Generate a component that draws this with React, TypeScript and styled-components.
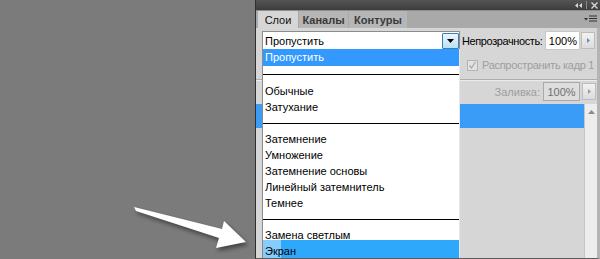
import styled, { createGlobalStyle } from 'styled-components';

const GlobalStyle = createGlobalStyle`
  html, body {
    margin: 0;
    padding: 0;
    background: #7b7b7b;
  }
  body {
    font-family: "Liberation Sans", Arial, sans-serif;
    font-size: 11px;
    color: #000;
  }
`;

type Mode = { name: string; selected?: boolean; hover?: boolean; short?: boolean } | { sep: number };

const modes: Mode[] = [
  { name: 'Пропустить', selected: true },
  { sep: 17 },
  { name: 'Обычные' },
  { name: 'Затухание' },
  { sep: 16 },
  { name: 'Затемнение' },
  { name: 'Умножение' },
  { name: 'Затемнение основы' },
  { name: 'Линейный затемнитель' },
  { name: 'Темнее' },
  { sep: 16 },
  { name: 'Замена светлым', short: true },
  { name: 'Экран', hover: true },
];

const tabs = [
  { name: 'Слои', w: 40, active: true },
  { name: 'Каналы', w: 49 },
  { name: 'Контуры', w: 58 },
];

function App() {
  return (
    <>
      <GlobalStyle />
      <Page>
        <Canvas>
          <Pointer />
        </Canvas>
        <Panel>
          <TitleBar>
            <CollapseIcon />
            <BarSep />
            <CloseIcon />
          </TitleBar>
          <TabStrip>
            {tabs.map((t) => (
              <Tab key={t.name} w={t.w} active={t.active}>
                {t.name}
              </Tab>
            ))}
            <PanelMenu />
          </TabStrip>
          <Body>
            <ControlRow>
              <Select>
                <SelectText>Пропустить</SelectText>
                <DropButton>
                  <svg width="7" height="4" viewBox="0 0 7 4">
                    <path d="M0 0h7L3.5 4z" fill="#000" />
                  </svg>
                </DropButton>
              </Select>
              <Label>Непрозрачность:</Label>
              <NumField w={35}>100%</NumField>
              <StepButton>
                <Tri color="#6a8db5" />
              </StepButton>
            </ControlRow>
            <PropagateRow>
              <CheckBox>
                <svg width="9" height="9" viewBox="0 0 9 9">
                  <path d="M1.5 4.5l2 2.5 4-6" stroke="#a8a8a8" strokeWidth="1.3" fill="none" />
                </svg>
              </CheckBox>
              <Dim tight>Распространить кадр 1</Dim>
            </PropagateRow>
            <Divider />
            <FillRow>
              <Dim>Заливка:</Dim>
              <NumField w={37} disabled>
                100%
              </NumField>
              <StepButton>
                <Tri color="#9a9a9a" />
              </StepButton>
            </FillRow>
            <LayersArea>
              <LayerList>
                <LayerRow />
              </LayerList>
              <ScrollBar>
                <svg width="7" height="4" viewBox="0 0 7 4">
                  <path d="M0 4h7L3.5 0z" fill="#8a8a8a" />
                </svg>
              </ScrollBar>
            </LayersArea>
          </Body>
          <Menu>
            {modes.map((m, i) =>
              'sep' in m ? (
                <MenuSep key={i} h={m.sep} />
              ) : (
                <MenuItem key={i} selected={m.selected} hover={m.hover} short={m.short}>
                  {m.name}
                </MenuItem>
              )
            )}
          </Menu>
        </Panel>
      </Page>
    </>
  );
}

const Page = styled.div`
  display: flex;
  width: 600px;
  height: 259px;
  overflow: hidden;
`;

const Canvas = styled.div`
  flex: 0 0 255px;
  position: relative;
  background: #7b7b7b;
`;

const Pointer = styled(({ className }: { className?: string }) => (
  <svg className={className} width="255" height="259" viewBox="0 0 255 259">
    <polygon
      points="134,207 222,229 224,221 246,242 216,248 219,238 136,211"
      fill="#fff"
    />
  </svg>
))`
  position: absolute;
  left: 0;
  top: 0;
  filter: drop-shadow(2px 3px 2px rgba(0, 0, 0, 0.45));
`;

const Panel = styled.div`
  flex: 0 0 345px;
  width: 345px;
  box-sizing: border-box;
  position: relative;
  display: flex;
  flex-direction: column;
  border-left: 1px solid #2e2e2e;
  border-right: 3px solid #b4b4b4;
  border-bottom: 1px solid #5c5c5c;
`;

const TitleBar = styled.div`
  height: 10px;
  margin-right: -3px;
  display: flex;
  align-items: center;
  justify-content: flex-end;
  gap: 2px;
  padding-right: 2px;
  background: linear-gradient(#555, #3d3d3d);
`;

const CollapseIcon = () => (
  <svg width="7" height="5" viewBox="0 0 7 5">
    <path d="M3 0v5L0 2.5zM7 0v5L4 2.5z" fill="#d8d8d8" />
  </svg>
);

const BarSep = styled.span`
  width: 1px;
  height: 8px;
  margin: 0 2px;
  background: #8a8a8a;
`;

const CloseIcon = () => (
  <svg width="7" height="7" viewBox="0 0 7 7">
    <path d="M0.5 0.5l6 6M6.5 0.5l-6 6" stroke="#d8d8d8" strokeWidth="1.4" />
  </svg>
);

const TabStrip = styled.div`
  height: 18px;
  margin-right: -3px;
  display: flex;
  align-items: flex-end;
  gap: 1px;
  padding-left: 2px;
  background: #a9a9a9;
  border-top: 1px solid #8e8e8e;
  box-sizing: border-box;
`;

const Tab = styled.div<{ active?: boolean; w: number }>`
  flex: 0 0 ${(p) => p.w}px;
  height: 17px;
  display: flex;
  align-items: center;
  justify-content: center;
  background: ${(p) => (p.active ? '#d6d6d6' : '#b6b6b6')};
  color: ${(p) => (p.active ? '#111' : '#3a3a3a')};
  font-weight: ${(p) => (p.active ? 'normal' : 'bold')};
  font-size: 11px;
`;

const PanelMenu = styled(({ className }: { className?: string }) => (
  <svg className={className} width="13" height="8" viewBox="0 0 13 8">
    <path d="M0 3h4L2 5.5z" fill="#333" />
    <path d="M5 1h8M5 3.5h8M5 6h8" stroke="#333" strokeWidth="1.2" />
  </svg>
))`
  margin: 0 3px 5px auto;
`;

const Body = styled.div`
  flex: 1;
  display: flex;
  flex-direction: column;
  background: #d6d6d6;
  min-height: 0;
`;

const ControlRow = styled.div`
  display: flex;
  align-items: center;
  height: 19px;
  margin-top: 3px;
  padding-left: 6px;
`;

const Select = styled.div`
  flex: 0 0 198px;
  height: 19px;
  box-sizing: border-box;
  display: flex;
  align-items: center;
  background: #fff;
  border: 1px solid #8d8d8d;
`;

const SelectText = styled.span`
  flex: 1;
  padding-left: 2px;
`;

const DropButton = styled.div`
  width: 17px;
  height: 16px;
  box-sizing: border-box;
  display: flex;
  align-items: center;
  justify-content: center;
  border: 1px solid #3c7fb1;
  border-radius: 1px;
  background: linear-gradient(#eaf6fd, #bddff3);
`;

const Label = styled.span`
  margin: 0 3px 0 2px;
  letter-spacing: -0.4px;
  white-space: nowrap;
`;

const NumField = styled.div<{ disabled?: boolean; w: number }>`
  flex: 0 0 ${(p) => p.w}px;
  height: 19px;
  box-sizing: border-box;
  display: flex;
  align-items: center;
  justify-content: center;
  background: ${(p) => (p.disabled ? '#dedede' : '#fff')};
  border: 1px solid ${(p) => (p.disabled ? '#a9a9a9' : '#c8c8c8')};
  color: ${(p) => (p.disabled ? '#6f6f6f' : '#000')};
`;

const StepButton = styled.div`
  flex: 0 0 14px;
  height: 17px;
  margin-left: 1px;
  box-sizing: border-box;
  display: flex;
  align-items: center;
  justify-content: center;
  background: linear-gradient(#f2f2f2, #dcdcdc);
  border: 1px solid #bdbdbd;
`;

const Tri = ({ color }: { color: string }) => (
  <svg width="3" height="5" viewBox="0 0 3 5">
    <path d="M0 0v5l3-2.5z" fill={color} />
  </svg>
);

const PropagateRow = styled.div`
  display: flex;
  align-items: center;
  gap: 4px;
  height: 16px;
  margin-top: 7px;
  padding-left: 211px;
  white-space: nowrap;
`;

const CheckBox = styled.div`
  flex: 0 0 auto;
  width: 11px;
  height: 11px;
  box-sizing: border-box;
  display: flex;
  align-items: center;
  justify-content: center;
  background: #e2e2e2;
  border: 1px solid #b3b3b3;
`;

const Dim = styled.span<{ tight?: boolean }>`
  color: #9e9e9e;
  white-space: nowrap;
  letter-spacing: ${(p) => (p.tight ? '-0.3px' : 'normal')};
`;

const Divider = styled.div`
  height: 1px;
  margin-top: 6px;
  background: #adadad;
  border-bottom: 1px solid #ececec;
`;

const FillRow = styled.div`
  display: flex;
  align-items: center;
  justify-content: flex-end;
  height: 17px;
  margin-top: 2px;
  padding-right: 1px;
  & > span {
    margin-right: 3px;
  }
  & > div:last-child {
    margin-left: 2px;
  }
`;

const LayersArea = styled.div`
  flex: 1;
  display: flex;
  margin-top: 4px;
  min-height: 0;
`;

const LayerList = styled.div`
  flex: 1;
  background: #d6d6d6;
`;

const LayerRow = styled.div`
  height: 24px;
  background: #3a9cf7;
`;

const ScrollBar = styled.div`
  flex: 0 0 12px;
  display: flex;
  justify-content: center;
  padding-top: 6px;
  background: #ededed;
  border-left: 1px solid #c6c6c6;
`;

const Menu = styled.div`
  position: absolute;
  left: 6px;
  top: 49px;
  bottom: 0;
  width: 198px;
  box-sizing: border-box;
  background: #fff;
  border-left: 1px solid #8a8a8a;
  border-right: 1px solid #e8e8e8;
  overflow: hidden;
`;

const MenuItem = styled.div<{ selected?: boolean; hover?: boolean; short?: boolean }>`
  height: ${(p) => (p.selected ? 17 : p.short ? 13 : p.hover ? 19 : 16)}px;
  line-height: 16px;
  padding-left: 2px;
  padding-top: ${(p) => (p.hover ? 3 : 0)}px;
  box-sizing: border-box;
  white-space: nowrap;
  background: ${(p) =>
    p.selected
      ? '#3399ff'
      : p.hover
      ? 'linear-gradient(to right, #86cdfb 0 18px, #2ea8fb 18px)'
      : 'transparent'};
  color: ${(p) => (p.selected ? '#fff' : '#000')};
`;

const MenuSep = styled.div<{ h: number }>`
  height: ${(p) => p.h}px;
  display: flex;
  align-items: center;
  &::after {
    content: '';
    flex: 1;
    height: 1px;
    background: #000;
  }
`;

export default App;
